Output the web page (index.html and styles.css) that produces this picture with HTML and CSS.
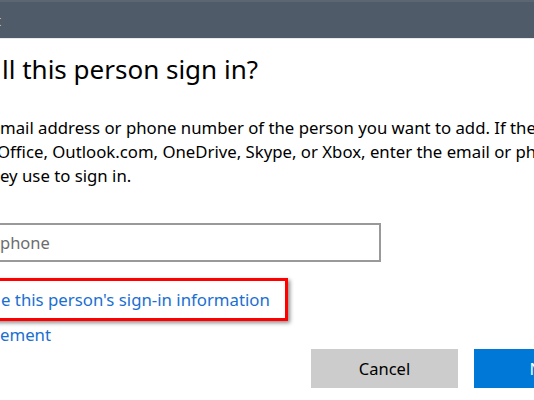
FILE: index.html
```html
<!DOCTYPE html>
<html>
<head>
<meta charset="utf-8">
<link rel="stylesheet" href="styles.css">
</head>
<body>
<div class="window">
  <div class="titlebar"><span class="title-frag">t</span></div>
  <div class="content">
    <h1 class="heading">ll this person sign in?</h1>
    <div class="desc">
      <div class="line">mail address or phone number of the person you want to add. If they use Windows,</div>
      <div class="line line-2">Office, Outlook.com, OneDrive, Skype, or Xbox, enter the email or phone number</div>
      <div class="line">ey use to sign in.</div>
    </div>
    <div class="field"><span class="placeholder">phone</span></div>
    <div class="highlight"><a class="link">e this person's sign-in information</a></div>
    <a class="link link-2">ement</a>
    <div class="actions">
      <button class="btn btn-cancel">Cancel</button>
      <button class="btn btn-next">Next</button>
    </div>
  </div>
</div>
</body>
</html>
```

FILE: styles.css
```css
html, body {
  margin: 0;
  padding: 0;
  background: #ffffff;
}
body {
  width: 534px;
  height: 400px;
  overflow: hidden;
  font-family: "Noto Sans", "Open Sans", sans-serif;
  color: #000;
}
.window {
  width: 534px;
  height: 400px;
  overflow: hidden;
}
.titlebar {
  height: 36px;
  background: #4f5b69;
  border-top: 2px solid #5c6673;
  border-bottom: 1px solid #e8eaed;
  display: flex;
  align-items: center;
}
.title-frag {
  color: #c9ced4;
  font-size: 14px;
  margin-left: -4px;
}
.content {
  display: flex;
  flex-direction: column;
  align-items: flex-start;
}
.heading {
  margin: 10px 0 0 2px;
  font-size: 26px;
  font-weight: 400;
  line-height: 40px;
  white-space: nowrap;
}
.desc {
  margin-top: 27px;
  font-size: 16.75px;
  line-height: 24px;
  white-space: nowrap;
}
.line-2 {
  margin-left: -3px;
}
.field {
  margin-top: 35px;
  margin-left: -10px;
  width: 387px;
  height: 35px;
  border: 2px solid #999999;
  box-sizing: content-box;
  display: flex;
  align-items: center;
}
.placeholder {
  margin-left: 8px;
  font-size: 16.5px;
  color: #6d6d6d;
}
.highlight {
  margin-top: 16px;
  margin-left: -10px;
  width: 292px;
  height: 37px;
  border: 3px solid #ff0000;
  box-shadow: 2px 2px 4px rgba(0,0,0,0.45);
  display: flex;
  align-items: center;
}
.link {
  color: #1a6fd1;
  font-size: 16.8px;
  white-space: nowrap;
}
.highlight .link {
  margin-left: 8px;
}
.link-2 {
  margin-top: 2px;
  line-height: 24px;
}
.actions {
  align-self: stretch;
  margin-top: 2px;
  display: flex;
  gap: 16px;
  padding-left: 311px;
}
.btn {
  flex: none;
  width: 147px;
  height: 39px;
  border: none;
  font-family: inherit;
  font-size: 16.5px;
}
.btn-cancel {
  background: #cccccc;
  color: #000;
}
.btn-next {
  background: #0078d7;
  color: #fff;
}
```
